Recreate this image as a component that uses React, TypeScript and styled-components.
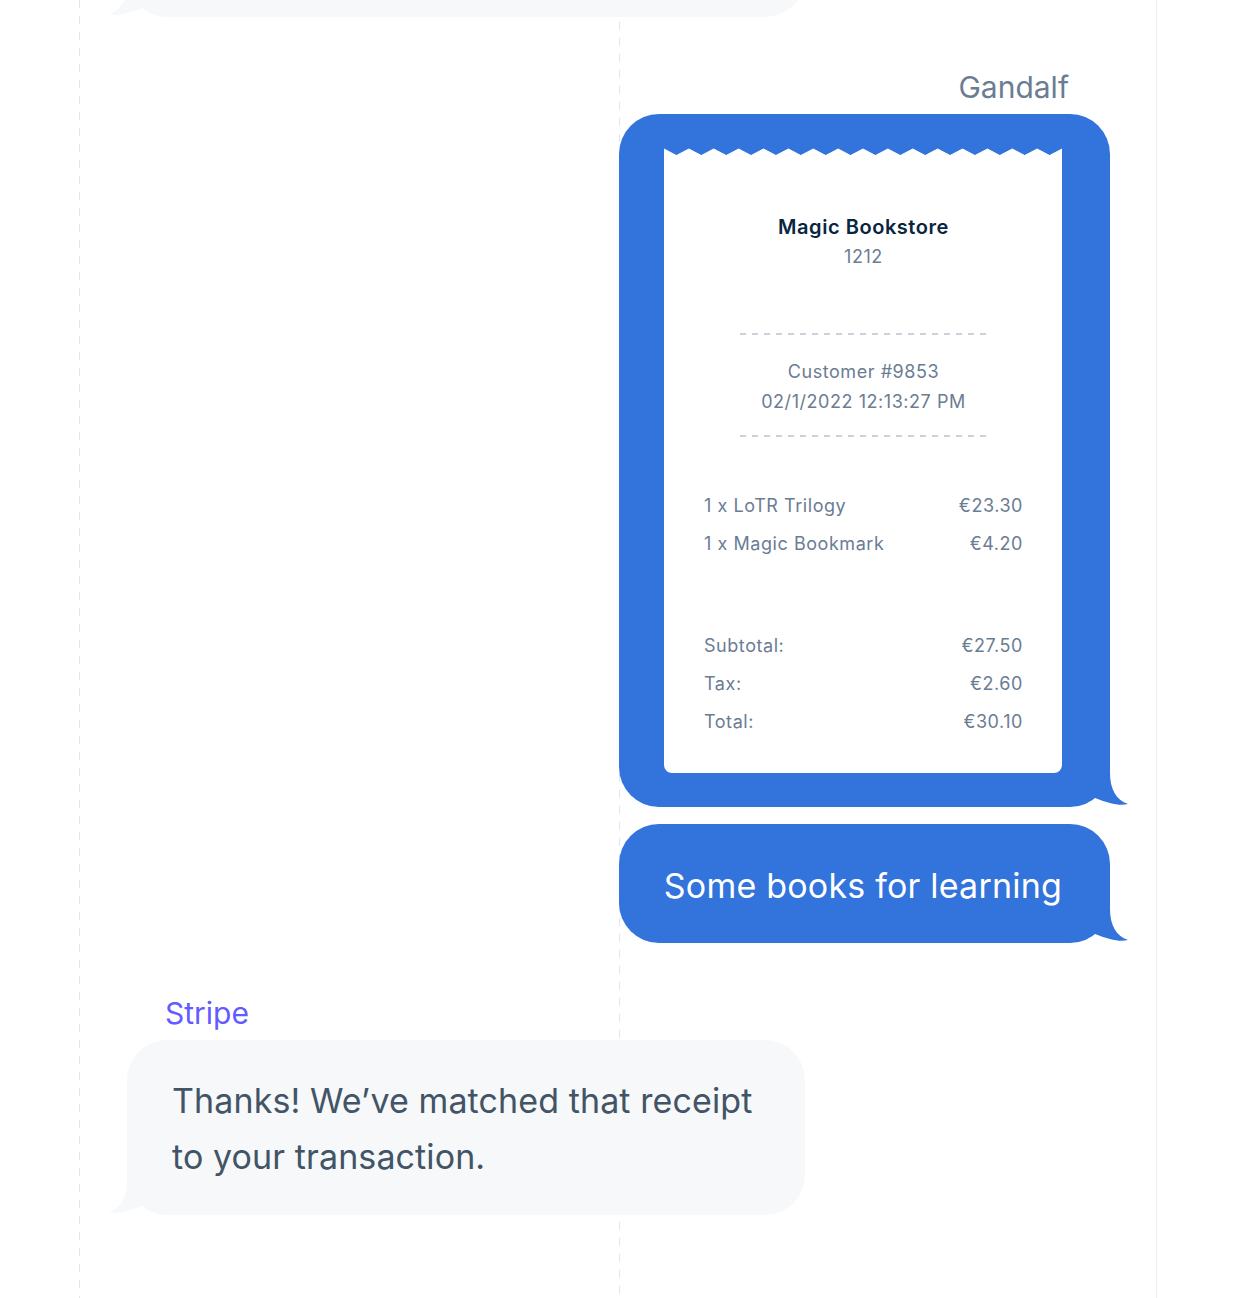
import React from "react";
import styled, { createGlobalStyle } from "styled-components";

const GlobalStyle = createGlobalStyle`
  * {
    box-sizing: border-box;
  }
  html, body {
    margin: 0;
    padding: 0;
    background: #fff;
    overflow: hidden;
  }
  body {
    font-family: Inter, "Noto Sans", sans-serif;
    -webkit-font-smoothing: antialiased;
  }
`;

const BLUE = "#3273dc";
const GRAY_BG = "#f6f8fa";

const Frame = styled.div`
  width: 1078px;
  height: 1298px;
  margin-left: 79px;
  padding: 0 46px 0 48px;
  border-right: 1px solid #efefef;
  background-image: linear-gradient(to bottom, #e2e5ea 50%, transparent 50%),
    linear-gradient(to bottom, #e2e5ea 50%, transparent 50%);
  background-size: 1px 16px, 1px 16px;
  background-position: 0 0, 540px 6px;
  background-repeat: repeat-y;
  display: flex;
  flex-direction: column;
  gap: 52px;
`;

const Group = styled.div<{ $side: "left" | "right" }>`
  display: flex;
  flex-direction: column;
  align-items: ${(p) => (p.$side === "right" ? "flex-end" : "flex-start")};
  gap: 17px;
`;

const Name = styled.div<{ $side: "left" | "right" }>`
  font-size: 30px;
  line-height: 36px;
  padding: ${(p) => (p.$side === "right" ? "0 41px 0 0" : "0 0 0 38px")};
  margin-bottom: -8px;
  color: ${(p) => (p.$side === "right" ? "#6b7c93" : "#635bff")};
`;

const Bubble = styled.div<{ $tone: "blue" | "gray" }>`
  position: relative;
  border-radius: 40px;
  background: ${(p) => (p.$tone === "blue" ? BLUE : GRAY_BG)};
`;

const TextBubble = styled(Bubble)`
  padding: 41px 48px 36px 45px;
  font-size: 34px;
  line-height: 42px;
  letter-spacing: 0.2px;
  color: #fff;
  white-space: nowrap;
`;

const ReplyBubble = styled(Bubble)`
  width: 678px;
  padding: 33px 48px 30px 45px;
  font-size: 34px;
  line-height: 56px;
  letter-spacing: 0.1px;
  color: #425466;
  white-space: nowrap;
`;

// the previous message, scrolled mostly out of view
const ClippedBubble = styled(Bubble)`
  width: 678px;
  height: 120px;
  margin-top: -103px;
`;

const ReceiptBubble = styled(Bubble)`
  padding: 34px 48px 34px 45px;
`;

const TailSvg = styled.svg<{ $side: "left" | "right" }>`
  position: absolute;
  bottom: 0;
  width: 40px;
  height: 40px;
  ${(p) =>
    p.$side === "right"
      ? "right: -18px;"
      : "left: -18px; transform: scaleX(-1);"}
`;

function Tail({ side, color }: { side: "left" | "right"; color: string }) {
  return (
    <TailSvg $side={side} viewBox="0 0 40 40">
      <path
        d="M0 0 H22 V6 C22 22 28 33 40 37 C32 39 22 37 7 31 L0 20 Z"
        fill={color}
      />
    </TailSvg>
  );
}

const Receipt = styled.div`
  width: 398px;
  display: flex;
  flex-direction: column;
`;

const Edge = styled.svg`
  display: block;
  width: 398px;
  height: 8px;
`;

const ReceiptBody = styled.div`
  background: #fff;
  border-radius: 0 0 8px 8px;
  padding: 56px 39px 32px 40px;
  color: #6b7c93;
  font-size: 18px;
  line-height: 30px;
  letter-spacing: 0.55px;
`;

const Centered = styled.div`
  text-align: center;
`;

const Store = styled.div`
  font-size: 20px;
  font-weight: 600;
  color: #0a2540;
`;

const Divider = styled.div<{ $top: number; $bottom: number }>`
  width: 248px;
  height: 2px;
  margin: ${(p) => p.$top}px auto ${(p) => p.$bottom}px;
  background-image: linear-gradient(to right, #cbd2db 50%, transparent 50%);
  background-size: 12px 2px;
`;

const Lines = styled.div<{ $gap?: number }>`
  margin-top: ${(p) => p.$gap ?? 0}px;
`;

const Row = styled.div`
  display: flex;
  justify-content: space-between;
  line-height: 38px;
`;

const zigzag = (() => {
  const w = 398;
  const teeth = 16;
  const step = w / teeth;
  let d = "M0 8 L0 1";
  for (let i = 0; i < teeth; i++) {
    d += ` L${((i + 0.5) * step).toFixed(2)} 7.5 L${((i + 1) * step).toFixed(2)} 1`;
  }
  return d + ` L${w} 8 Z`;
})();

const items = [
  { name: "1 x LoTR Trilogy", price: "€23.30" },
  { name: "1 x Magic Bookmark", price: "€4.20" },
];

const totals = [
  { name: "Subtotal:", price: "€27.50" },
  { name: "Tax:", price: "€2.60" },
  { name: "Total:", price: "€30.10" },
];

const App = () => {
  return (
    <>
      <GlobalStyle />
      <Frame>
        <Group $side="left">
          <ClippedBubble $tone="gray">
            <Tail side="left" color={GRAY_BG} />
          </ClippedBubble>
        </Group>

        <Group $side="right">
          <Name $side="right">Gandalf</Name>
          <ReceiptBubble $tone="blue">
            <Receipt>
              <Edge viewBox="0 0 398 8" preserveAspectRatio="none">
                <path
                  d={zigzag}
                  fill="#fff"
                  stroke="#fff"
                  strokeWidth="1"
                  strokeLinejoin="round"
                />
              </Edge>
              <ReceiptBody>
                <Centered>
                  <Store>Magic Bookstore</Store>
                  <div>1212</div>
                </Centered>
                <Divider $top={61} $bottom={22} />
                <Centered>
                  <div>Customer #9853</div>
                  <div>02/1/2022 12:13:27 PM</div>
                </Centered>
                <Divider $top={18} $bottom={0} />
                <Lines $gap={50}>
                  {items.map((it) => (
                    <Row key={it.name}>
                      <span>{it.name}</span>
                      <span>{it.price}</span>
                    </Row>
                  ))}
                </Lines>
                <Lines $gap={64}>
                  {totals.map((it) => (
                    <Row key={it.name}>
                      <span>{it.name}</span>
                      <span>{it.price}</span>
                    </Row>
                  ))}
                </Lines>
              </ReceiptBody>
            </Receipt>
            <Tail side="right" color={BLUE} />
          </ReceiptBubble>
          <TextBubble $tone="blue">
            Some books for learning
            <Tail side="right" color={BLUE} />
          </TextBubble>
        </Group>

        <Group $side="left">
          <Name $side="left">Stripe</Name>
          <ReplyBubble $tone="gray">
            Thanks! We’ve matched that receipt
            <br />
            to your transaction.
            <Tail side="left" color={GRAY_BG} />
          </ReplyBubble>
        </Group>
      </Frame>
    </>
  );
};

export default App;
